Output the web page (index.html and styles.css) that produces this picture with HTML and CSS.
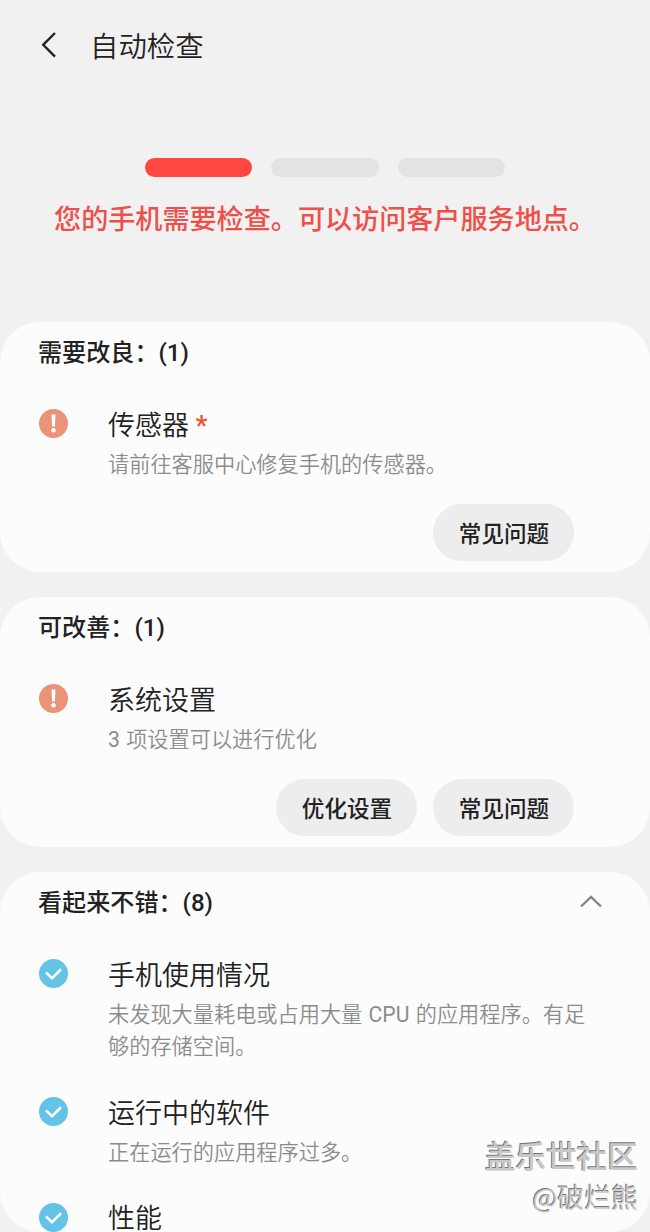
FILE: index.html
```
<!DOCTYPE html>
<html lang="zh-CN">
<head>
	<meta charset="utf-8">
	<meta name="viewport" content="width=device-width, initial-scale=1">
	<title>自动检查</title>
	<link rel="stylesheet" href="styles.css">
</head>
<body>
<svg class="symbols" width="0" height="0">
	<symbol id="warn" viewBox="0 0 28 28">
		<circle cx="14" cy="14" r="14" fill="#ea9378"/>
		<path d="M12.1 5.3h3.8l-.5 11.5h-2.8z" fill="#fff"/>
		<circle cx="14" cy="20.6" r="2.2" fill="#fff"/>
	</symbol>
	<symbol id="ok" viewBox="0 0 28 28">
		<circle cx="14" cy="14" r="14" fill="#64c4e7"/>
		<path d="M6.7 12.9l5.8 5.6 8.8-8.6" fill="none" stroke="#fff" stroke-width="2.4"/>
	</symbol>
</svg>

<header>
	<svg class="back" viewBox="0 0 16 26"><path d="M14 1L2.2 12.8 14 24.6" fill="none" stroke="#222" stroke-width="2.4"/></svg>
	<h1>自动检查</h1>
</header>

<div class="status">
	<div class="steps">
		<span class="active"></span>
		<span></span>
		<span></span>
	</div>
	<p>您的手机需要检查。可以访问客户服务地点。</p>
</div>

<main>
	<section class="card">
		<h2>需要改良：(1)</h2>
		<div class="item">
			<svg class="icon"><use href="#warn"/></svg>
			<div>
				<h3>传感器 <span class="star">*</span></h3>
				<p>请前往客服中心修复手机的传感器。</p>
			</div>
		</div>
		<div class="buttons">
			<button>常见问题</button>
		</div>
	</section>

	<section class="card">
		<h2>可改善：(1)</h2>
		<div class="item">
			<svg class="icon"><use href="#warn"/></svg>
			<div>
				<h3>系统设置</h3>
				<p><span class="latin">3 </span>项设置可以进行优化</p>
			</div>
		</div>
		<div class="buttons">
			<button>优化设置</button>
			<button>常见问题</button>
		</div>
	</section>

	<section class="card good">
		<h2>看起来不错：(8)
			<svg class="arrow" viewBox="0 0 22 13"><path d="M1 11.5L11 2l10 9.5" fill="none" stroke="#858585" stroke-width="2.4"/></svg>
		</h2>
		<div class="item">
			<svg class="icon"><use href="#ok"/></svg>
			<div>
				<h3>手机使用情况</h3>
				<p>未发现大量耗电或占用大量<span class="latin"> CPU </span>的应用程序。有足够的存储空间。</p>
			</div>
		</div>
		<div class="item">
			<svg class="icon"><use href="#ok"/></svg>
			<div>
				<h3>运行中的软件</h3>
				<p>正在运行的应用程序过多。</p>
			</div>
		</div>
		<div class="item">
			<svg class="icon"><use href="#ok"/></svg>
			<div>
				<h3 class="last">性能</h3>
			</div>
		</div>
	</section>
</main>

<div class="watermark">
	<div class="site">盖乐世社区</div>
	<div class="user">@破烂熊</div>
</div>
</body>
</html>
```
FILE: styles.css
```
*
{
	box-sizing: border-box;
}

body
{
	position: relative;
	overflow: hidden;
	height: 1232px;
	margin: 0;
	background: #f1f1f1;
	color: #222;
	font-family: Roboto, "Noto Sans CJK SC", sans-serif;
}

h1,
h2,
h3,
p
{
	margin: 0;
	font-weight: 350;
}

.symbols
{
	display: block;
}

header
{
	display: flex;
	align-items: center;
	height: 90px;
	padding-left: 41px;
}

.back
{
	width: 16px;
	height: 26px;
	margin-top: -1px;
}

h1
{
	margin: 5px 0 0 33px;
	font-size: 28.4px;
	line-height: 40px;
}

.status
{
	height: 232px;
	padding-top: 68px;
	color: #ef4f49;
	text-align: center;
}

.steps
{
	display: flex;
	justify-content: center;
	gap: 19px;
}

.steps span
{
	width: 107.5px;
	height: 19px;
	border-radius: 10px;
	background: #e3e3e3;
}

.steps .active
{
	background: #ff4842;
}

.status p
{
	margin-top: 23px;
	font-size: 27.1px;
	font-weight: 500;
	line-height: 40px;
}

main
{
	display: flex;
	flex-direction: column;
	gap: 25px;
}

.card
{
	height: 250px;
	padding: 10px 39px 0 38px;
	border-radius: 40px;
	background: #fcfcfc;
}

.good
{
	height: 360px;
}

h2
{
	display: flex;
	align-items: center;
	justify-content: space-between;
	height: 36px;
	margin-bottom: 37px;
	font-size: 24.1px;
	font-weight: 500;
}

.arrow
{
	width: 22px;
	height: 13px;
	margin: 2px 9px 0 0;
}

.item
{
	display: flex;
	margin-bottom: 30px;
}

.icon
{
	flex: none;
	width: 29px;
	height: 29px;
	margin: 4px 40px 0 1px;
}

h3
{
	padding-top: 2px;
	font-size: 27px;
	line-height: 38px;
}

.last
{
	padding-top: 5px;
	line-height: 30px;
}

.star
{
	color: #e8561f;
	font-weight: 500;
}

.item p
{
	margin: 4px 17px 0 0;
	color: #8c8c8c;
	font-size: 21.2px;
	line-height: 32px;
}

.latin
{
	font-weight: 400;
	word-spacing: 1px;
}

.buttons
{
	display: flex;
	justify-content: flex-end;
	gap: 16px;
	margin: -7px 37px 0 0;
}

button
{
	width: 141px;
	height: 57px;
	padding: 0 0 0 1px;
	border: 0;
	border-radius: 29px;
	background: #ededed;
	color: #222;
	font: 500 22.6px Roboto, "Noto Sans CJK SC", sans-serif;
}

.watermark
{
	position: absolute;
	right: 12px;
	bottom: 15px;
	color: #c8c8c8;
	font-family: "Noto Sans CJK SC", sans-serif;
	text-align: right;
	text-shadow: -1px -1px 0 #777;
}

.site
{
	font-size: 30.6px;
	font-weight: 500;
	line-height: 44px;
}

.user
{
	font-size: 26.8px;
	font-weight: 350;
	line-height: 40px;
}
```
